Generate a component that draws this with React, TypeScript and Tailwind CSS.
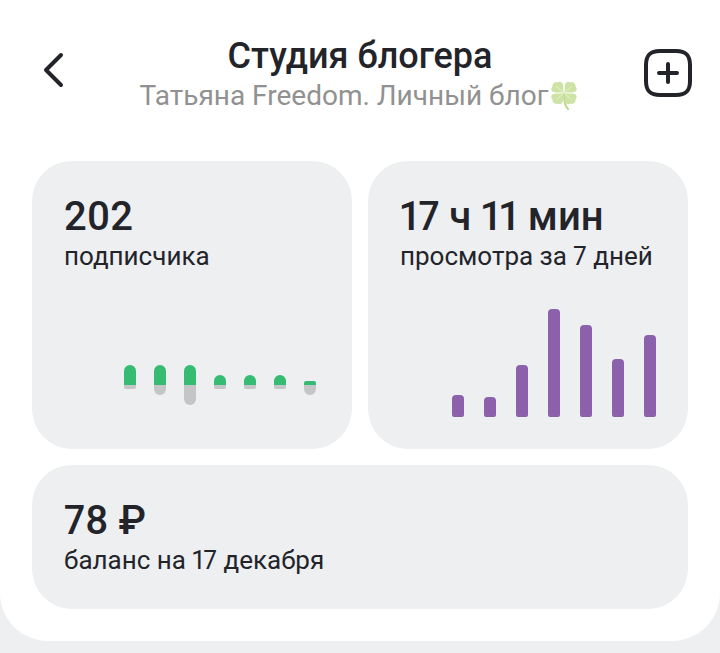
import type { ReactNode } from "react";

type FollowersDay = { joined: number; left: number };

type StatCardProps = {
  value: string;
  label: string;
  className?: string;
  children?: ReactNode;
};

const followers: FollowersDay[] = [
  { joined: 20, left: 4 },
  { joined: 20, left: 10 },
  { joined: 20, left: 20 },
  { joined: 10, left: 4 },
  { joined: 10, left: 4 },
  { joined: 10, left: 4 },
  { joined: 4, left: 10 },
];

const watchTime = [22, 20, 52, 108, 92, 58, 82];

const BackIcon = () => (
  <svg viewBox="0 0 48 48" className="size-12" fill="none" aria-hidden="true">
    <path
      d="M33 9 18 24l15 15"
      stroke="currentColor"
      strokeWidth="4"
      strokeLinecap="round"
      strokeLinejoin="round"
    />
  </svg>
);

const AddIcon = () => (
  <svg viewBox="0 0 48 48" className="size-12" fill="none" aria-hidden="true">
    <path
      d="M16 2h16c10 0 14 4 14 14v16c0 10-4 14-14 14H16C6 46 2 42 2 32V16C2 6 6 2 16 2Z"
      stroke="currentColor"
      strokeWidth="4"
    />
    <path
      d="M24 15v18M15 24h18"
      stroke="currentColor"
      strokeWidth="4"
      strokeLinecap="round"
    />
  </svg>
);

const CloverIcon = () => (
  <svg viewBox="0 0 32 32" className="size-8 shrink-0" aria-hidden="true">
    <path
      d="M16 14c0 7 1 12 4 15"
      fill="none"
      stroke="#bdd794"
      strokeWidth="2"
      strokeLinecap="round"
    />
    {["1 1", "-1 1", "1 -1", "-1 -1"].map((flip) => (
      <g key={flip} transform={`translate(16 13) scale(${flip})`}>
        <path
          d="M-.4-.4C-3-1-7 0-10-1-13-1.500-13.500-4.500-11.500-6.500-12-9.500-9-11.500-6.500-10.500-4.500-12-1.500-11-1-8-.5-5-1-3-.4-.4Z"
          fill="#cde3a4"
        />
        <path
          d="M-1-1-7-6"
          fill="none"
          stroke="#dbecbb"
          strokeWidth="1.500"
          strokeLinecap="round"
        />
      </g>
    ))}
  </svg>
);

const StatCard = ({ value, label, className = "", children }: StatCardProps) => (
  <section
    className={`flex flex-col rounded-[40px] bg-[#edeff1] px-8 pt-8 proportional-nums ${className}`}
  >
    <h2 className="text-[40px] leading-[48px] font-medium">{value}</h2>
    <p className="text-[26px] leading-[30px]">{label}</p>
    {children}
  </section>
);

const FollowersChart = () => (
  <div className="mt-auto flex items-center justify-end gap-[18px] pr-1">
    {followers.map((day, i) => (
      <div key={i} className="grid h-10 w-3 grid-rows-2">
        <div
          className={`self-end bg-[#35bb72] ${day.joined > 4 ? "rounded-t-[6px]" : "rounded-t-[2px]"}`}
          style={{ height: day.joined }}
        />
        <div
          className={`bg-[#c4c5c6] ${day.left > 4 ? "rounded-b-[6px]" : "rounded-b-[2px]"}`}
          style={{ height: day.left }}
        />
      </div>
    ))}
  </div>
);

const WatchTimeChart = () => (
  <div className="mt-auto flex items-end justify-end gap-5">
    {watchTime.map((height, i) => (
      <div
        key={i}
        className="w-3 rounded-t-[4px] rounded-b-[2px] bg-[#8b61ac]"
        style={{ height }}
      />
    ))}
  </div>
);

const App = () => {
  return (
    <div className="min-h-screen bg-[#edeff1] font-['Roboto',sans-serif] text-[#23242a]">
      <main className="rounded-b-[48px] bg-white pb-8">
        <header className="flex items-start justify-between px-7 pt-9 pb-[45px]">
          <button type="button" aria-label="Назад" className="mt-2.5 shrink-0">
            <BackIcon />
          </button>
          <div className="flex flex-col items-center">
            <h1 className="text-[36px] leading-[40px] font-medium">
              Студия блогера
            </h1>
            <p className="flex items-center text-[28px] leading-[40px] text-[#919191]">
              Татьяна Freedom. Личный блог
              <CloverIcon />
            </p>
          </div>
          <button
            type="button"
            aria-label="Создать"
            className="mt-[13px] shrink-0"
          >
            <AddIcon />
          </button>
        </header>

        <div className="grid grid-cols-2 gap-4 px-8">
          <StatCard value="202" label="подписчика" className="h-72 pb-11">
            <FollowersChart />
          </StatCard>
          <StatCard
            value="17 ч 11 мин"
            label="просмотра за 7 дней"
            className="h-72 pb-8"
          >
            <WatchTimeChart />
          </StatCard>
          <StatCard
            value="78 ₽"
            label="баланс на 17 декабря"
            className="col-span-2 min-h-36 pb-8"
          />
        </div>
      </main>
    </div>
  );
};

export default App;
